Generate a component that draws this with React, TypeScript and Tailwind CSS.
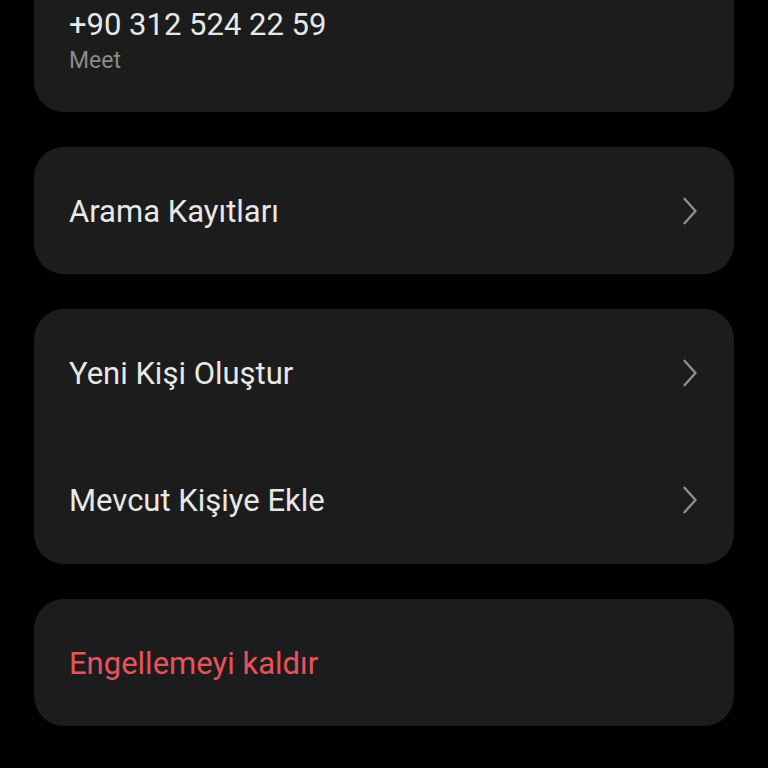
import React from "react";

const Chevron = () => (
  <svg width="16" height="28" viewBox="0 0 16 28" fill="none" className="shrink-0">
    <path d="M2.5 1.8 L13.5 14 L2.5 26.2" stroke="#8e8e8e" strokeWidth="2.4" strokeLinecap="round" strokeLinejoin="round" />
  </svg>
);

const Row = ({ label, color = "text-[#e8e8e8]", chevron = true }: { label: string; color?: string; chevron?: boolean }) => (
  <div className="flex h-[127px] items-center justify-between pl-[35px] pr-[36px]">
    <span className={`mt-[2px] text-[31px] leading-[36px] ${color}`}>{label}</span>
    {chevron && <Chevron />}
  </div>
);

export default function App() {
  return (
    <div className="h-[768px] w-[768px] overflow-hidden bg-black" style={{ fontFamily: "Roboto, 'Noto Sans', sans-serif" }}>
      <div className="flex flex-col gap-[35px] px-[34px]">
        <div className="mt-[-60px] rounded-[30px] bg-[#1c1c1c] pl-[35px] pb-[37px] pt-[67px]">
          <div className="text-[31px] leading-[36px] text-[#e8e8e8]">+90 312 524 22 59</div>
          <div className="mt-[4px] text-[23px] leading-[28px] text-[#8a8a8a]">Meet</div>
        </div>
        <div className="rounded-[30px] bg-[#1c1c1c]">
          <Row label="Arama Kayıtları" />
        </div>
        <div className="rounded-[30px] bg-[#1c1c1c] py-[0.5px]">
          <Row label="Yeni Kişi Oluştur" />
          <Row label="Mevcut Kişiye Ekle" />
        </div>
        <div className="rounded-[30px] bg-[#1c1c1c]">
          <Row label="Engellemeyi kaldır" color="text-[#e8525c]" chevron={false} />
        </div>
      </div>
    </div>
  );
}
